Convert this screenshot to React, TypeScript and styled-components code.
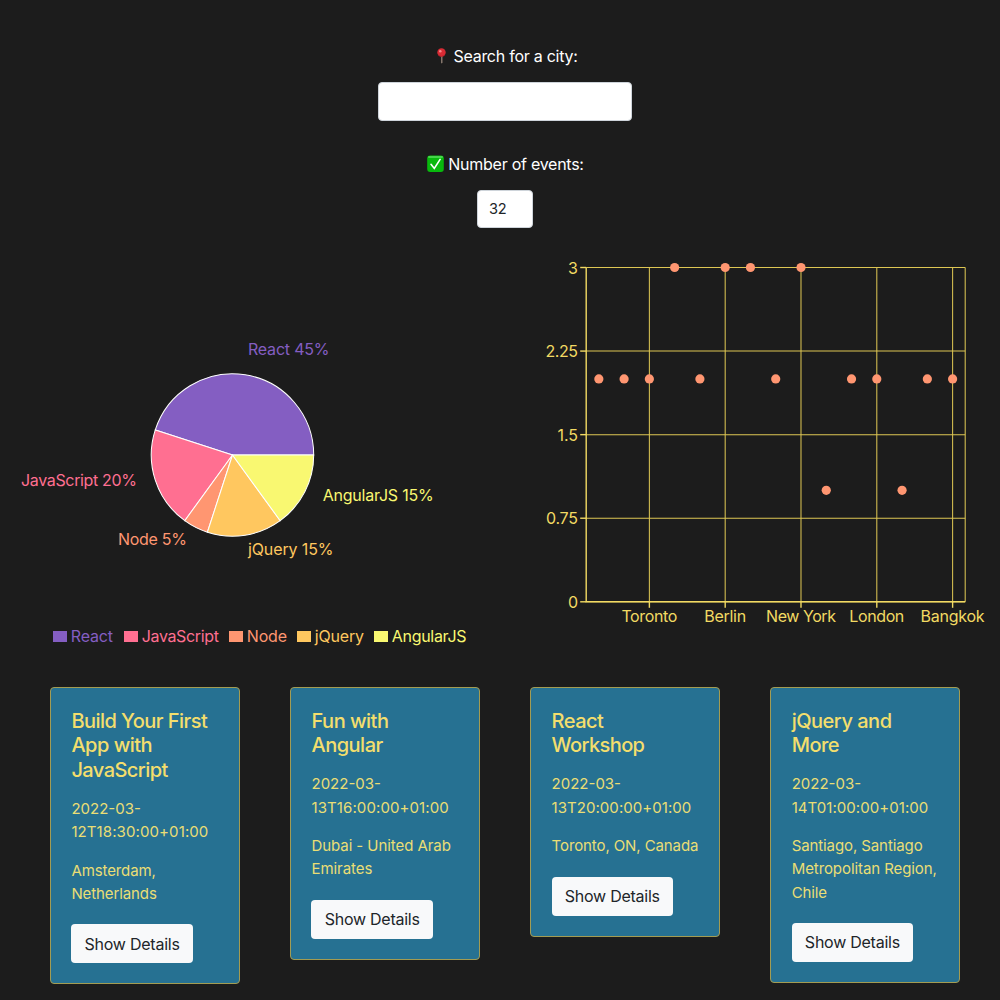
import React from 'react';
import styled, { createGlobalStyle } from 'styled-components';

const YELLOW = '#f2da63';

const GlobalStyle = createGlobalStyle`
  *, *::before, *::after { box-sizing: border-box; }
  body {
    margin: 0;
    background: #1c1c1c;
    color: #fff;
    font-family: Inter, "Liberation Sans", sans-serif;
    font-size: 16px;
  }
`;

const Page = styled.main`
  display: flex;
  flex-direction: column;
  width: 1000px;
  height: 1000px;
  overflow: hidden;
  background: #1c1c1c;
`;

const Controls = styled.section`
  display: flex;
  flex-direction: column;
  align-items: center;
  height: 246px;
  padding: 44px 0 0 11px;
`;

const Label = styled.label`
  display: flex;
  align-items: center;
  height: 25px;
  line-height: 25px;
  font-size: 16px;
  letter-spacing: -0.26px;
  white-space: nowrap;
`;

const Field = styled.input<{ $width: number; $height: number; $after: number }>`
  width: ${(p) => p.$width}px;
  height: ${(p) => p.$height}px;
  margin: 13px 1px ${(p) => p.$after}px 0;
  padding: 1px 11px 0;
  border: 1px solid #ced4da;
  border-radius: 4px;
  background: #fff;
  color: #212529;
  font: 14.6px Inter, "Liberation Sans", sans-serif;
  letter-spacing: -0.3px;
  outline: none;
`;

const Charts = styled.section`
  display: grid;
  grid-template-columns: 500px 500px;
  height: 441px;
`;

const PieColumn = styled.div`
  display: flex;
  flex-direction: column;
`;

const Drawing = styled.svg`
  display: block;
  font-family: Inter, "Liberation Sans", sans-serif;
  font-size: 16px;
`;

const Legend = styled.ul`
  display: flex;
  list-style: none;
  margin: 0;
  padding: 0 0 0 53px;
  height: 26px;
  align-items: center;
`;

const LegendItem = styled.li<{ $color: string; $width: number; $track: number }>`
  display: flex;
  align-items: center;
  flex: none;
  width: ${(p) => p.$width}px;
  color: ${(p) => p.$color};
  letter-spacing: ${(p) => p.$track}px;
  line-height: 25px;

  &::before {
    content: '';
    flex: none;
    width: 14.4px;
    height: 10.6px;
    margin: 1px 3.4px 0 0;
    background: ${(p) => p.$color};
  }
`;

const Cards = styled.section`
  display: grid;
  grid-template-columns: repeat(4, 189.5px);
  column-gap: 50.6px;
  align-items: start;
  padding-left: 50px;
`;

const Card = styled.article<{ $height: number }>`
  height: ${(p) => p.$height}px;
  padding: 20.6px 18px 20px 20.4px;
  border: 1px solid #a39c52;
  border-radius: 4px;
  background: #267192;
  color: #eade75;
`;

const CardTitle = styled.h5`
  margin: 0 0 14.4px;
  color: #f3de6d;
  font-size: 20px;
  line-height: 24.7px;
  font-weight: 500;
`;

const CardText = styled.p`
  margin: 0 0 15.4px;
  font-size: 15px;
  line-height: 23.2px;
  white-space: nowrap;
`;

const Line = styled.span<{ $track: number }>`
  display: block;
  letter-spacing: ${(p) => p.$track}px;
`;

const DetailsButton = styled.button`
  display: block;
  width: 121.4px;
  height: 39px;
  margin: 19.2px 0 0;
  padding: 0;
  border: 0;
  border-radius: 4px;
  background: #f8f9fa;
  color: #212529;
  font: 16px Inter, "Liberation Sans", sans-serif;
  letter-spacing: -0.25px;
`;

const PinIcon = () => (
  <svg width="20" height="20" viewBox="0 0 20 20">
    <path d="M8 8h1.5v7.2l-.7 1.6-.8-1.6z" fill="#85766c" />
    <circle cx="8.5" cy="5.5" r="4.2" fill="#d92b34" />
    <path d="M4.7 7.2a4.2 4.2 0 0 0 7.6 0 5 5 0 0 1-7.6 0z" fill="#a81c27" />
    <circle cx="7.3" cy="4.3" r="1.3" fill="#f7868a" />
  </svg>
);

const CheckIcon = () => (
  <svg width="21" height="18" viewBox="0 0 21 18">
    <rect x="0.2" y="0.6" width="16.6" height="16.4" rx="3" fill="#08b90d" />
    <rect x="1" y="1" width="15" height="2" rx="1" fill="#45d54a" />
    <path d="M4 9.3l3.3 4.1 5.8-9" fill="none" stroke="#fff" strokeWidth="1.6" strokeLinecap="round" />
  </svg>
);

const CX = 232.5;
const CY = 209;
const R = 81.2;

const slices = [
  { name: 'React', share: 45, color: '#845ec2', x: 248, y: 109, w: 81.5 },
  { name: 'JavaScript', share: 20, color: '#ff6f91', x: 21, y: 240.3, w: 116 },
  { name: 'Node', share: 5, color: '#ff9671', x: 118, y: 299, w: 69 },
  { name: 'jQuery', share: 15, color: '#ffc75f', x: 248, y: 309, w: 85.5 },
  { name: 'AngularJS', share: 15, color: '#f9f871', x: 322.7, y: 255, w: 111 },
];

const legend = [
  { width: 71, track: -0.15 },
  { width: 105, track: -0.36 },
  { width: 68, track: -0.2 },
  { width: 77, track: -0.2 },
  { width: 100, track: -0.3 },
];

const point = (share: number) => {
  const a = (share / 100) * Math.PI * 2;
  return `${CX + R * Math.cos(a)} ${CY - R * Math.sin(a)}`;
};

const PieChart = () => {
  let start = 0;
  return (
    <Drawing width="500" height="377" viewBox="0 0 500 377">
      {slices.map((s) => {
        const from = point(start);
        start += s.share;
        return (
          <path
            key={s.name}
            d={`M${CX} ${CY}L${from}A${R} ${R} 0 0 0 ${point(start)}Z`}
            fill={s.color}
            stroke="#fff"
            strokeWidth="1.03"
          />
        );
      })}
      {slices.map((s) => (
        <text key={s.name} x={s.x} y={s.y} fill={s.color} textLength={s.w}>
          {s.name} {s.share}%
        </text>
      ))}
    </Drawing>
  );
};

const LEFT = 86.2;
const RIGHT = 465.2;
const TOP = 21.5;
const BOTTOM = 355.8;
const STEP = 25.27;
const counts = [2, 2, 2, 3, 2, 3, 3, 2, 3, 1, 2, 2, 1, 2, 2];
const yTicks = [
  { v: 3, w: 10 },
  { v: 2.25, w: 32.5 },
  { v: 1.5, w: 20.5 },
  { v: 0.75, w: 32 },
  { v: 0, w: 10 },
];
const cities = [
  { name: 'Toronto', i: 2, w: 56 },
  { name: 'Berlin', i: 5, w: 42 },
  { name: 'New York', i: 8, w: 70 },
  { name: 'London', i: 11, w: 55 },
  { name: 'Bangkok', i: 14, w: 64 },
];

const px = (i: number) => LEFT + STEP * (i + 0.5);
const py = (v: number) => BOTTOM - ((BOTTOM - TOP) * v) / 3;

const ScatterChart = () => (
  <Drawing width="500" height="400" viewBox="0 0 500 400">
    <g stroke="#ddc653" strokeWidth="1.03">
      {yTicks.map((t) => (
        <path key={t.v} d={`M${LEFT} ${py(t.v)}H${RIGHT}`} />
      ))}
      {cities.map((c) => (
        <path key={c.name} d={`M${px(c.i)} ${TOP}V${BOTTOM}`} />
      ))}
      <path d={`M${RIGHT} ${TOP}V${BOTTOM}`} />
    </g>
    <g stroke={YELLOW} strokeWidth="1.4" fill="none">
      {yTicks.map((t) => (
        <path key={t.v} d={`M${LEFT - 6} ${py(t.v)}H${LEFT}`} />
      ))}
      {cities.map((c) => (
        <path key={c.name} d={`M${px(c.i)} ${BOTTOM}v6`} />
      ))}
      <path d={`M${LEFT} ${TOP}V${BOTTOM}H${RIGHT}`} />
    </g>
    {counts.map((v, i) => (
      <circle key={i} cx={px(i)} cy={py(v)} r="4.6" fill="#ff9671" />
    ))}
    <g fill={YELLOW}>
      {yTicks.map((t) => (
        <text key={t.v} x={78 - t.w} y={py(t.v) + 6} textLength={t.w}>
          {t.v}
        </text>
      ))}
      {cities.map((c) => (
        <text key={c.name} x={px(c.i) - c.w / 2} y="376" textLength={c.w}>
          {c.name}
        </text>
      ))}
    </g>
  </Drawing>
);

type Row = [string, number];
const events: { title: Row[]; date: Row[]; place: Row[]; height: number }[] = [
  {
    title: [['Build Your First', -0.54], ['App with', -0.5], ['JavaScript', -0.56]],
    date: [['2022-03-', 0], ['12T18:30:00+01:00', 0.1]],
    place: [['Amsterdam,', -0.1], ['Netherlands', -0.1]],
    height: 297,
  },
  {
    title: [['Fun with', -0.5], ['Angular', -0.5]],
    date: [['2022-03-', 0], ['13T16:00:00+01:00', 0.1]],
    place: [['Dubai - United Arab', -0.07], ['Emirates', -0.05]],
    height: 273,
  },
  {
    title: [['React', -0.5], ['Workshop', -0.6]],
    date: [['2022-03-', 0], ['13T20:00:00+01:00', 0.05]],
    place: [['Toronto, ON, Canada', -0.1]],
    height: 250,
  },
  {
    title: [['jQuery and', -0.5], ['More', -0.5]],
    date: [['2022-03-', 0], ['14T01:00:00+01:00', 0.05]],
    place: [['Santiago, Santiago', -0.1], ['Metropolitan Region,', -0.08], ['Chile', -0.1]],
    height: 296,
  },
];

const Lines = ({ rows }: { rows: Row[] }) => (
  <>
    {rows.map(([text, track]) => (
      <Line key={text} $track={track}>
        {text}
      </Line>
    ))}
  </>
);

export default function App() {
  return (
    <>
      <GlobalStyle />
      <Page>
        <Controls>
          <Label htmlFor="city">
            <PinIcon />
            Search for a city:
          </Label>
          <Field id="city" $width={254} $height={39} $after={30.5} />
          <Label htmlFor="count">
            <CheckIcon />
            Number of events:
          </Label>
          <Field id="count" $width={56} $height={38} $after={0} defaultValue="32" />
        </Controls>
        <Charts>
          <PieColumn>
            <PieChart />
            <Legend>
              {slices.map((s, i) => (
                <LegendItem key={s.name} $color={s.color} $width={legend[i].width} $track={legend[i].track}>
                  {s.name}
                </LegendItem>
              ))}
            </Legend>
          </PieColumn>
          <ScatterChart />
        </Charts>
        <Cards>
          {events.map((e) => (
            <Card key={e.title[0][0]} $height={e.height}>
              <CardTitle>
                <Lines rows={e.title} />
              </CardTitle>
              <CardText>
                <Lines rows={e.date} />
              </CardText>
              <CardText>
                <Lines rows={e.place} />
              </CardText>
              <DetailsButton>Show Details</DetailsButton>
            </Card>
          ))}
        </Cards>
      </Page>
    </>
  );
}
